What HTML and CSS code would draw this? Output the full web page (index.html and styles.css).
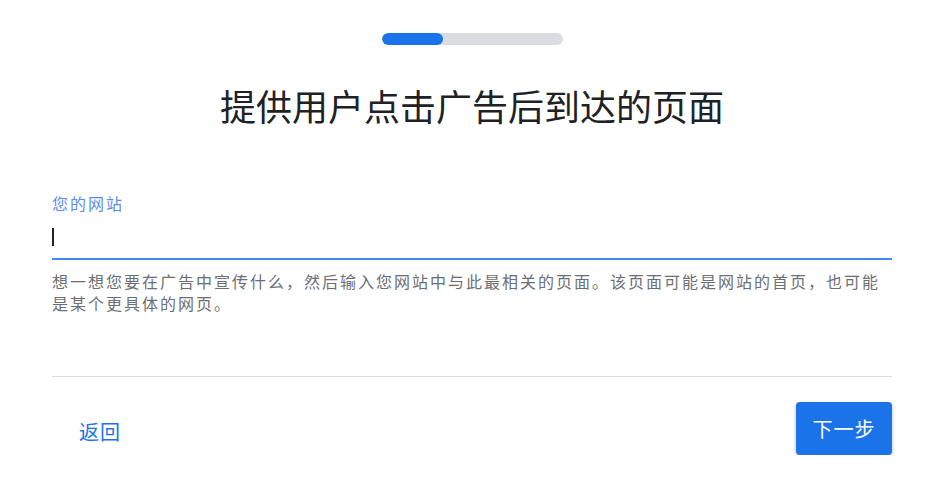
FILE: index.html
```html
<!DOCTYPE html>
<html lang="zh-CN">
<head>
<meta charset="utf-8">
<title>提供用户点击广告后到达的页面</title>
<link rel="stylesheet" href="styles.css">
</head>
<body>
<div class="page">
  <div class="progress"><div class="progress-fill"></div></div>
  <h1 class="title">提供用户点击广告后到达的页面</h1>
  <div class="field">
    <label class="field-label">您的网站</label>
    <div class="field-input"><span class="caret"></span></div>
    <p class="field-help">想一想您要在广告中宣传什么，然后输入您网站中与此最相关的页面。该页面可能是网站的首页，也可能是某个更具体的网页。</p>
  </div>
  <hr class="divider">
  <div class="footer">
    <a class="back" href="#">返回</a>
    <button class="next" type="button">下一步</button>
  </div>
</div>
</body>
</html>
```
FILE: styles.css
```css
html, body {
  margin: 0;
  padding: 0;
  background: #ffffff;
}
body {
  font-family: "Noto Sans CJK SC", "Noto Sans", sans-serif;
  color: #202124;
}
.page {
  margin: 0 53px 0 52px;
}
.progress {
  width: 181px;
  height: 12px;
  margin: 33px auto 0;
  background: #dadce0;
  border-radius: 6px;
  overflow: hidden;
}
.progress-fill {
  width: 61px;
  height: 100%;
  background: #1a73e8;
  border-radius: 6px;
}
.title {
  margin: 36px 0 0;
  font-size: 36px;
  line-height: 48px;
  font-weight: 400;
  text-align: center;
  color: #202124;
}
.field {
  margin-top: 64px;
}
.field-label {
  display: block;
  font-size: 16px;
  line-height: 20px;
  letter-spacing: 2px;
  color: #5b8def;
}
.field-input {
  padding: 15px 0 12px;
  border-bottom: 2px solid #4285f4;
  display: flex;
}
.caret {
  width: 1.5px;
  height: 18px;
  background: #202124;
}
.field-help {
  margin: 10px 0 0;
  font-size: 16px;
  line-height: 22px;
  letter-spacing: 2px;
  color: #6b6f74;
}
.divider {
  margin: 62px 0 0;
  border: 0;
  border-top: 1px solid #dadce0;
  height: 0;
}
.footer {
  margin-top: 25px;
  display: flex;
  justify-content: space-between;
  align-items: center;
}
.back {
  margin-left: 27px;
  margin-top: 6px;
  font-size: 20px;
  line-height: 24px;
  letter-spacing: 1px;
  color: #1a73e8;
  text-decoration: none;
}
.next {
  width: 96px;
  height: 53px;
  border: 0;
  border-radius: 4px;
  background: #1a73e8;
  color: #ffffff;
  font-family: "Noto Sans CJK SC", "Noto Sans", sans-serif;
  font-size: 20px;
  letter-spacing: 1px;
  box-shadow: 0 2px 4px rgba(60, 64, 67, 0.35);
  padding: 0;
}
```
